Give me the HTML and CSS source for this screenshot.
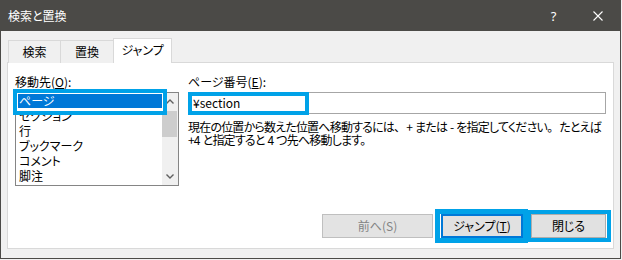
FILE: index.html
```html
<!DOCTYPE html>
<html lang="ja">
<head>
<meta charset="utf-8">
<title>検索と置換</title>
<link rel="stylesheet" href="styles.css">
</head>
<body>
<div class="window">
  <div class="titlebar">
    <span class="title">検索と置換</span>
    <span class="caption-btn help">?</span>
    <span class="caption-btn close">
      <svg width="10" height="10" viewBox="0 0 10 10"><path d="M0.5 0.5 L9.5 9.5 M9.5 0.5 L0.5 9.5" stroke="#ffffff" stroke-width="1.1" fill="none"/></svg>
    </span>
  </div>
  <div class="content">
    <div class="tabs">
      <div class="tab first">検索</div>
      <div class="tab">置換</div>
      <div class="tab active">ジャンプ</div>
    </div>
    <div class="panel">
      <div class="fields">
        <div class="col-left">
          <div class="label">移動先(<u>O</u>):</div>
          <div class="listbox">
            <ul class="items">
              <li class="item selected">ページ</li>
              <li class="item">セクション</li>
              <li class="item">行</li>
              <li class="item">ブックマーク</li>
              <li class="item">コメント</li>
              <li class="item">脚注</li>
            </ul>
            <div class="scrollbar">
              <div class="sb-btn">
                <svg width="8" height="5" viewBox="0 0 8 5"><polyline points="0.5,4.5 4,1 7.5,4.5" fill="none" stroke="#606060" stroke-width="1.4"/></svg>
              </div>
              <div class="sb-thumb"></div>
              <div class="sb-track"></div>
              <div class="sb-btn">
                <svg width="8" height="5" viewBox="0 0 8 5"><polyline points="0.5,0.5 4,4 7.5,0.5" fill="none" stroke="#606060" stroke-width="1.4"/></svg>
              </div>
            </div>
          </div>
        </div>
        <div class="col-right">
          <div class="label">ページ番号(<u>E</u>):</div>
          <div class="input">¥section</div>
          <p class="desc">現在の位置から数えた位置へ移動するには、<span class="gap"></span>+ または - を指定してください。<span class="gap"></span>たとえば<br>+4 と指定すると 4 つ先へ移動します。</p>
        </div>
      </div>
      <div class="buttons">
        <div class="btn disabled prev">前へ(S)</div>
        <div class="btn default jump">ジャンプ(<u>T</u>)</div>
        <div class="btn closebtn">閉じる</div>
      </div>
    </div>
  </div>
  <div class="mark mark-list"></div>
  <div class="mark mark-input"></div>
  <div class="mark mark-jump"></div>
  <div class="mark mark-close"></div>
</div>
</body>
</html>
```

FILE: styles.css
```css
* { box-sizing: border-box; }
html, body { margin: 0; padding: 0; }
body {
  width: 622px;
  height: 260px;
  background: #f0f0f0;
  font-family: "Noto Sans CJK JP", "Noto Sans", sans-serif;
  font-size: 12px;
  font-feature-settings: "palt";
  color: #000;
  overflow: hidden;
}
.window {
  position: relative;
  width: 621px;
  height: 259px;
  border-left: 1px solid #4b4a47;
  border-right: 1px solid #4b4a47;
  border-bottom: 1px solid #4b4a47;
  background: #f0f0f0;
}
.titlebar {
  height: 31px;
  background: #4b4a47;
  color: #fff;
  display: flex;
  align-items: center;
}
.title {
  padding-left: 7px;
  font-size: 12px;
  line-height: 16px;
  flex: 1;
}
.caption-btn {
  width: 46px;
  height: 31px;
  display: flex;
  align-items: center;
  justify-content: center;
}
.help {
  font-family: "Noto Sans", sans-serif;
  font-size: 13px;
  padding-left: 5px;
}
.close { padding-left: 2px; }
.close svg { display: block; }

.content {
  padding-top: 8px;
  padding-left: 6px;
}
.tabs {
  display: flex;
  align-items: flex-end;
  height: 24px;
  padding-left: 1px;
  position: relative;
  z-index: 1;
  margin-bottom: -1px;
}
.tab {
  height: 23px;
  width: 52px;
  border-top: 1px solid #d9d9d9;
  background: #f0f0f0;
  display: flex;
  align-items: center;
  justify-content: center;
  line-height: 14px;
  padding-bottom: 1px;
}
.tab.first {
  width: 53px;
  border-left: 1px solid #d9d9d9;
  border-right: 1px solid #d9d9d9;
}
.tab.active {
  width: 59px;
  height: 25px;
  background: #fff;
  border-left: 1px solid #d9d9d9;
  border-right: 1px solid #d9d9d9;
  padding-bottom: 2px;
}
.panel {
  width: 607px;
  height: 187px;
  background: #fff;
  border: 1px solid #d9d9d9;
  padding: 11px 7px 10px 7px;
  display: flex;
  flex-direction: column;
}
.fields {
  display: grid;
  grid-template-columns: 164px minmax(0, 1fr);
  column-gap: 9px;
}
.col-right { min-width: 0; }
.label {
  line-height: 16px;
  height: 16px;
  white-space: nowrap;
}
.label u { text-underline-offset: 1px; }
.listbox {
  margin-top: 2px;
  height: 94px;
  border: 1px solid #858585;
  display: flex;
}
.items {
  list-style: none;
  margin: 0;
  padding: 0;
  flex: 1;
  overflow: hidden;
}
.item {
  height: 15px;
  line-height: 15px;
  padding-left: 3px;
  white-space: nowrap;
}
.item.selected {
  background: #0078d7;
  color: #fff;
}
.scrollbar {
  width: 16px;
  background: #f0f0f0;
  display: flex;
  flex-direction: column;
}
.sb-btn {
  height: 17px;
  display: flex;
  align-items: center;
  justify-content: center;
}
.sb-btn svg { display: block; }
.sb-thumb {
  margin-top: 1px;
  height: 26px;
  margin-right: 1px;
  background: #cdcdcd;
}
.sb-track { flex: 1; }
.input {
  margin-top: 2px;
  height: 22px;
  border: 1px solid #a6a6a6;
  line-height: 20px;
  padding-left: 4px;
}
.desc {
  margin: 6px 0 0 0;
  line-height: 13px;
  white-space: nowrap;
  letter-spacing: -0.8px;
  word-spacing: 1px;
}
.gap {
  display: inline-block;
  width: 7px;
}
.buttons {
  margin-top: auto;
  display: flex;
  justify-content: flex-end;
  gap: 8px;
}
.btn {
  height: 24px;
  background: #e1e1e1;
  border: 1px solid #adadad;
  display: flex;
  align-items: center;
  justify-content: center;
  line-height: 14px;
}
.btn.prev { width: 111px; }
.btn.jump { width: 82px; }
.btn.closebtn { width: 75px; }
.btn.disabled {
  color: #838383;
  border-color: #bfbfbf;
  background: #e3e3e3;
}
.btn.default {
  border: 2px solid #0078d7;
}
.mark {
  position: absolute;
  border: 4px solid #00a2e8;
  pointer-events: none;
}
.mark-list {
  left: 12px; top: 89px; width: 154px; height: 26px;
  box-shadow: inset 0 0 0 1px #fff;
}
.mark-input {
  left: 187px; top: 92px; width: 121px; height: 23px;
}
.mark-jump {
  left: 434px; top: 209px; width: 93px; height: 34px;
  border-width: 5px;
}
.mark-close {
  left: 526px; top: 210px; width: 84px; height: 32px;
}
```
